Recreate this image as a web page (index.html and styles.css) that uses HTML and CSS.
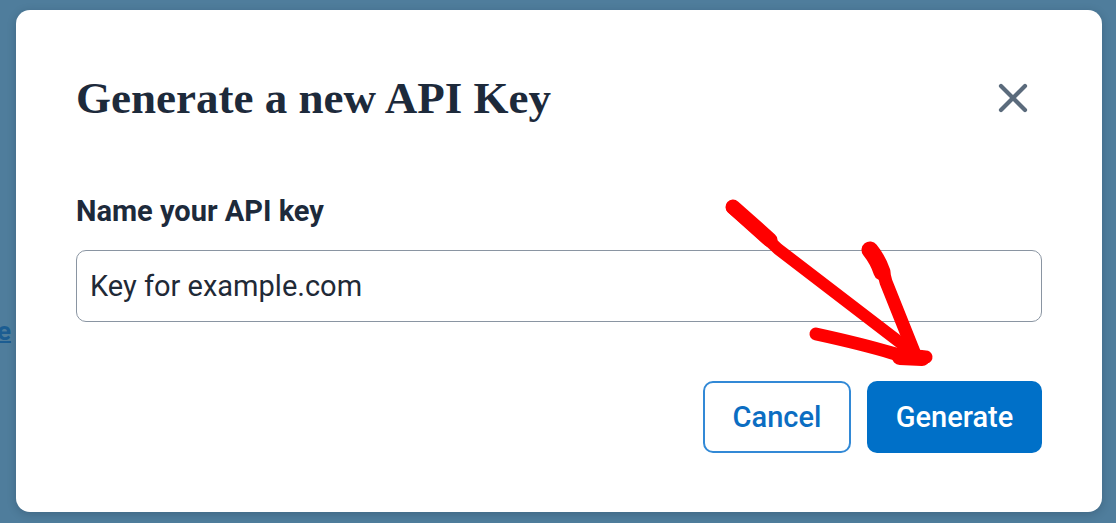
FILE: index.html
```html
<!DOCTYPE html>
<html lang="en">

<head>
    <meta charset="UTF-8">
    <meta name="viewport" content="width=device-width, initial-scale=1.0">
    <title>Generate a new API Key</title>
    <link rel="stylesheet" href="styles.css">
</head>

<body>

    <a class="behindLink" href="#">e</a>

    <div class="overlay">
        <div class="modal">
            <div class="modalHeader">
                <h1>Generate a new API Key</h1>
                <button class="closeButton" aria-label="Close">
                    <svg viewBox="0 0 30 30" width="30" height="30">
                        <path d="M3 3 L27 27 M27 3 L3 27" stroke="#5b6b7c" stroke-width="4.2" stroke-linecap="round" fill="none"/>
                    </svg>
                </button>
            </div>
            <label class="fieldLabel" for="keyName">Name your API key</label>
            <input class="fieldInput" id="keyName" type="text" value="Key for example.com">
            <div class="actions">
                <button class="button buttonCancel">Cancel</button>
                <button class="button buttonGenerate">Generate</button>
            </div>
        </div>
    </div>

    <!-- hand drawn arrow on top of the screenshot -->
    <svg class="arrow" viewBox="0 0 1116 523" width="1116" height="523">
        <g stroke="#ff0000" stroke-linecap="round" stroke-linejoin="round" fill="none">
            <path d="M732 208 Q 758 230 778 249 L 915 354" stroke-width="12"/>
            <path d="M733 207 Q 752 224 770 240" stroke-width="15"/>
            <path d="M869 249 Q 882 262 886 282 L 916 357" stroke-width="13"/>
            <path d="M870 250 Q 878 260 882 272" stroke-width="17"/>
            <path d="M816 334 Q 862 344 892 353 Q 912 359 926 357" stroke-width="13"/>
            <path d="M900 357 L 922 358" stroke-width="16"/>
        </g>
    </svg>

</body>

</html>
```

FILE: styles.css
```css
body {
    margin: 0;
    width: 1116px;
    height: 523px;
    background: #4f7d9c;
    font-family: Roboto, 'Liberation Sans', sans-serif;
    overflow: hidden;
    position: relative;
}

.behindLink {
    position: absolute;
    left: -3px;
    top: 316px;
    font-size: 26px;
    font-weight: 700;
    color: #1c5d92;
    text-decoration: underline;
    text-decoration-thickness: 2px;
}

.overlay {
    padding: 10px 14px 11px 16px;
}

.modal {
    position: relative;
    background: #ffffff;
    border-radius: 14px;
    padding: 60px 60px 59px;
    box-shadow: 0 2px 8px rgba(20, 40, 60, 0.25);
}

.modalHeader {
    display: flex;
    justify-content: space-between;
    align-items: center;
    height: 56px;
}

.modalHeader h1 {
    margin: 0;
    font-family: 'Liberation Serif', 'DejaVu Serif', serif;
    font-weight: 700;
    font-size: 45px;
    line-height: 56px;
    color: #1d2a3b;
}

.closeButton {
    background: none;
    border: 0;
    padding: 0;
    width: 30px;
    height: 30px;
    margin-right: 14px;
    cursor: pointer;
}

.closeButton svg {
    display: block;
}

.fieldLabel {
    display: block;
    margin-top: 68px;
    font-size: 29px;
    line-height: 34px;
    font-weight: 700;
    color: #1d2a3b;
}

.fieldInput {
    display: block;
    box-sizing: border-box;
    width: 100%;
    height: 72px;
    margin-top: 22px;
    padding: 0 13px;
    border: 1px solid #8a95a2;
    border-radius: 10px;
    font-family: Roboto, 'Liberation Sans', sans-serif;
    font-size: 29px;
    color: #1f2a37;
    outline: none;
}

.actions {
    display: flex;
    justify-content: flex-end;
    gap: 16px;
    margin-top: 59px;
}

.button {
    height: 72px;
    border-radius: 10px;
    font-family: Roboto, 'Liberation Sans', sans-serif;
    font-size: 29px;
    font-weight: 500;
    cursor: pointer;
}

.buttonCancel {
    width: 148px;
    background: #ffffff;
    border: 2px solid #3289d6;
    color: #0b6dc2;
}

.buttonGenerate {
    width: 175px;
    background: #0070c8;
    border: 0;
    color: #ffffff;
}

.arrow {
    position: absolute;
    left: 0;
    top: 0;
    pointer-events: none;
}
```
